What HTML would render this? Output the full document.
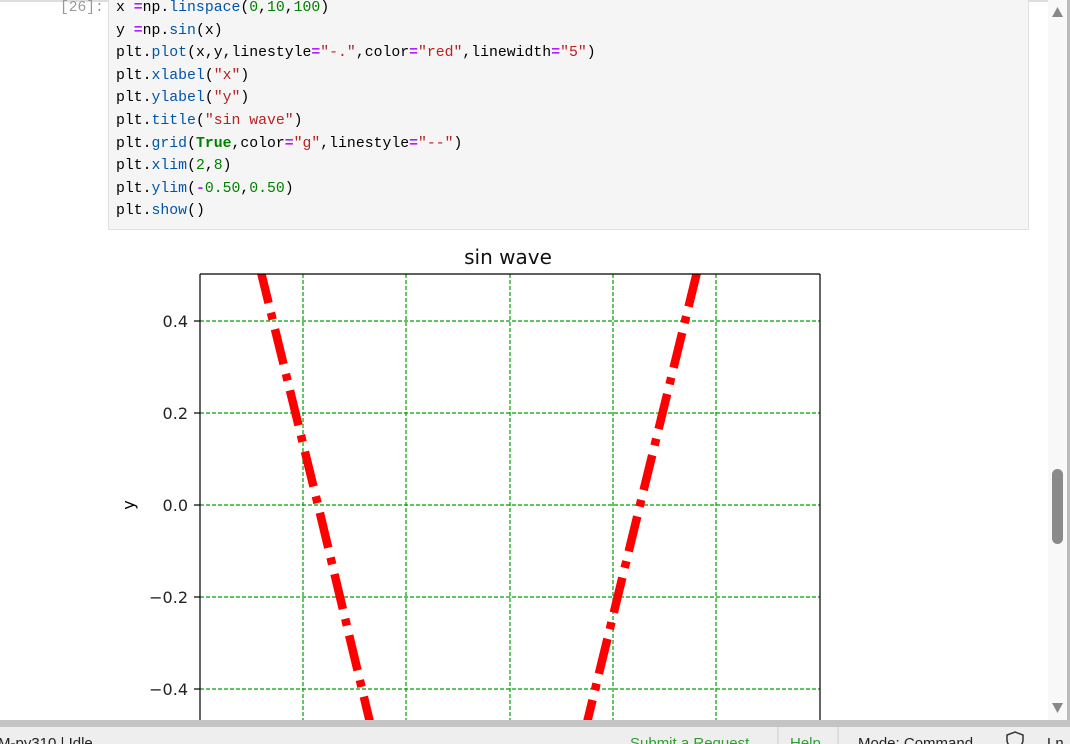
<!DOCTYPE html>
<html><head><style>
body{margin:0;width:1070px;height:744px;overflow:hidden;background:#fff;position:relative;font-family:"Liberation Sans",sans-serif}
.code{position:absolute;left:108px;top:-4px;width:919px;height:232px;background:#f5f5f5;border:1px solid #e0e0e0}
pre{margin:0;position:absolute;left:116px;top:-3px;font-family:"Liberation Mono",monospace;font-size:14.8px;line-height:22.6px;color:#000}
.p{color:#aa22ff;font-weight:bold}.f{color:#0055aa}.s{color:#ba2121}.n{color:#008000}.k{color:#008000;font-weight:bold}
.prompt{position:absolute;left:60px;top:-3px;font-family:"Liberation Mono",monospace;font-size:14.6px;line-height:22.6px;color:#999}
</style></head><body>
<div style="position:absolute;left:0;top:0;width:1070px;height:2px;background:#ddd"></div>
<div class="code"></div>
<div class="prompt">[26]:</div>
<pre>x <span class="p">=</span>np.<span class="f">linspace</span>(<span class="n">0</span>,<span class="n">10</span>,<span class="n">100</span>)
y <span class="p">=</span>np.<span class="f">sin</span>(x)
plt.<span class="f">plot</span>(x,y,linestyle<span class="p">=</span><span class="s">"-."</span>,color<span class="p">=</span><span class="s">"red"</span>,linewidth<span class="p">=</span><span class="s">"5"</span>)
plt.<span class="f">xlabel</span>(<span class="s">"x"</span>)
plt.<span class="f">ylabel</span>(<span class="s">"y"</span>)
plt.<span class="f">title</span>(<span class="s">"sin wave"</span>)
plt.<span class="f">grid</span>(<span class="k">True</span>,color<span class="p">=</span><span class="s">"g"</span>,linestyle<span class="p">=</span><span class="s">"--"</span>)
plt.<span class="f">xlim</span>(<span class="n">2</span>,<span class="n">8</span>)
plt.<span class="f">ylim</span>(<span class="p">-</span><span class="n">0.50</span>,<span class="n">0.50</span>)
plt.<span class="f">show</span>()</pre>
<svg style="position:absolute;left:0;top:0" width="1070" height="744">
<defs><clipPath id="c"><rect x="200" y="274" width="620" height="460"/></clipPath></defs>
<text x="508" y="264" font-size="20" text-anchor="middle" font-family="DejaVu Sans,sans-serif" fill="#111">sin wave</text>
<g stroke="#00a000" stroke-width="1.2" stroke-dasharray="4 2">
<line x1="303" y1="274" x2="303" y2="720"/><line x1="406" y1="274" x2="406" y2="720"/><line x1="510" y1="274" x2="510" y2="720"/><line x1="613" y1="274" x2="613" y2="720"/><line x1="716" y1="274" x2="716" y2="720"/>
<line x1="200" y1="321" x2="820" y2="321"/><line x1="200" y1="413" x2="820" y2="413"/><line x1="200" y1="505" x2="820" y2="505"/><line x1="200" y1="597" x2="820" y2="597"/><line x1="200" y1="689" x2="820" y2="689"/>
</g>
<g clip-path="url(#c)" fill="none" stroke="#ff0000" stroke-width="8.5" stroke-dasharray="36 10 7 10">
<polyline points="260,268 318,505 373,735"/>
<polyline points="584,735 640,505 698,268"/>
</g>
<g stroke="#000" stroke-width="1.2" fill="none">
<line x1="200" y1="274" x2="820" y2="274"/><line x1="200" y1="274" x2="200" y2="720"/><line x1="820" y1="274" x2="820" y2="720"/>
<line x1="194" y1="321" x2="200" y2="321"/><line x1="194" y1="413" x2="200" y2="413"/><line x1="194" y1="505" x2="200" y2="505"/><line x1="194" y1="597" x2="200" y2="597"/><line x1="194" y1="689" x2="200" y2="689"/>
</g>
<g font-size="16" font-family="DejaVu Sans,sans-serif" text-anchor="end" fill="#222">
<text x="188" y="327">0.4</text><text x="188" y="419">0.2</text><text x="188" y="511">0.0</text><text x="188" y="603">−0.2</text><text x="188" y="695">−0.4</text>
</g>
<text transform="translate(134,505) rotate(-90)" font-size="16" text-anchor="middle" font-family="DejaVu Sans,sans-serif">y</text>
<rect x="1048" y="0" width="19" height="720" fill="#f8f8f8"/>
<rect x="1067" y="0" width="3" height="720" fill="#bbb"/>
<rect x="1052" y="469" width="11" height="75" rx="5.5" fill="#8a8a8a"/>
<polygon points="1052,17 1063,17 1057.5,7" fill="#888"/>
<polygon points="1052,703 1063,703 1057.5,713" fill="#888"/>
<rect x="0" y="720" width="1070" height="7" fill="#c4c4c4"/>
<rect x="0" y="727" width="1070" height="17" fill="#eeeeee"/>
<line x1="778" y1="727" x2="778" y2="744" stroke="#ccc"/><line x1="838" y1="727" x2="838" y2="744" stroke="#ccc"/>
<g font-size="15" fill="#222"><text x="-2" y="748">M-py310 | Idle</text><text x="630" y="748" fill="#2e9e2e">Submit a Request</text><text x="790" y="748" fill="#2e9e2e">Help</text><text x="858" y="748">Mode: Command</text><text x="1047" y="748">Ln</text></g>
<path d="M1015 732 l8 3 v5 q0 6 -8 9 q-8 -3 -8 -9 v-5z" fill="none" stroke="#333" stroke-width="1.5"/>
</svg>
</body></html>
